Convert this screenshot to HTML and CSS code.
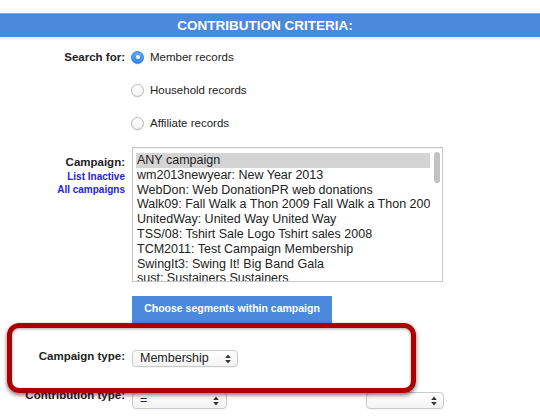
FILE: index.html
```html
<!DOCTYPE html>
<html>
<head>
<meta charset="utf-8">
<link rel="stylesheet" href="styles.css">
</head>
<body>
<div class="header">CONTRIBUTION CRITERIA:</div>
<div class="form">
  <div class="row row-search">
    <div class="label label-search">Search for:</div>
    <div class="radios">
      <div class="radio"><span class="dot checked"></span>Member records</div>
      <div class="radio"><span class="dot"></span>Household records</div>
      <div class="radio"><span class="dot"></span>Affiliate records</div>
    </div>
  </div>
  <div class="row row-campaign">
    <div class="label label-campaign">
      <div>Campaign:</div>
      <a class="link">List Inactive</a>
      <a class="link">All campaigns</a>
    </div>
    <div class="campaign-field">
      <div class="listbox">
        <div class="items">
          <div class="item sel">ANY campaign</div>
          <div class="item">wm2013newyear: New Year 2013</div>
          <div class="item">WebDon: Web DonationPR web donations</div>
          <div class="item">Walk09: Fall Walk a Thon 2009 Fall Walk a Thon 2009</div>
          <div class="item">UnitedWay: United Way United Way</div>
          <div class="item">TSS/08: Tshirt Sale Logo Tshirt sales 2008</div>
          <div class="item">TCM2011: Test Campaign Membership</div>
          <div class="item">SwingIt3: Swing It! Big Band Gala</div>
          <div class="item">sust: Sustainers Sustainers</div>
        </div>
        <div class="track"><div class="thumb"></div></div>
      </div>
      <div class="btn">Choose segments within campaign</div>
    </div>
  </div>
  <div class="row row-ctype">
    <div class="label label-inline">Campaign type:</div>
    <div class="controls">
      <div class="select select-ctype">
        <span class="sel-text">Membership</span>
        <svg class="arrows" width="6" height="10" viewBox="0 0 6 10"><path d="M3 0.5 L5.8 4 L0.2 4 Z M3 9.5 L5.8 6 L0.2 6 Z" fill="#333"/></svg>
      </div>
    </div>
  </div>
  <div class="row row-contrib">
    <div class="label label-inline label-contrib">Contribution type:</div>
    <div class="controls contrib-controls">
      <div class="select select-op">
        <span class="sel-text">=</span>
        <svg class="arrows" width="6" height="10" viewBox="0 0 6 10"><path d="M3 0.5 L5.8 4 L0.2 4 Z M3 9.5 L5.8 6 L0.2 6 Z" fill="#333"/></svg>
      </div>
      <div class="select select-val">
        <span class="sel-text"></span>
        <svg class="arrows" width="6" height="10" viewBox="0 0 6 10"><path d="M3 0.5 L5.8 4 L0.2 4 Z M3 9.5 L5.8 6 L0.2 6 Z" fill="#333"/></svg>
      </div>
    </div>
  </div>
</div>
<div class="annotation"></div>
</body>
</html>
```
FILE: styles.css
```css
html, body {
  margin: 0;
  padding: 0;
  background: #fff;
}
body {
  font-family: "Liberation Sans", Arial, sans-serif;
  color: #222;
  width: 540px;
  height: 417px;
  overflow: hidden;
  position: relative;
}
.header {
  margin-top: 13px;
  height: 23px;
  border-top: 1px solid #7aa8e8;
  background: #4a89dc;
  color: #fff;
  font-weight: bold;
  font-size: 13.5px;
  line-height: 23px;
  text-align: center;
  padding-right: 10px;
  box-shadow: 0 2px 1px rgba(74, 137, 220, 0.12);
}
.form {
  padding-top: 3.5px;
}
.row {
  display: grid;
  grid-template-columns: 125px 1fr;
  column-gap: 7px;
}
.label {
  text-align: right;
  font-weight: bold;
  font-size: 11.5px;
  color: #222;
}
.label-search {
  line-height: 33px;
}
.radios {
  display: flex;
  flex-direction: column;
}
.radio {
  height: 33px;
  display: flex;
  align-items: center;
  font-size: 11.5px;
  color: #222;
}
.dot {
  width: 13px;
  height: 13px;
  box-sizing: border-box;
  border-radius: 50%;
  border: 1px solid #b8b8b8;
  background: linear-gradient(#ffffff, #f2f2f2);
  box-shadow: 0 1px 1px rgba(0, 0, 0, 0.08);
  margin-left: -1px;
  margin-right: 6px;
  position: relative;
}
.dot.checked {
  border-color: #2f7de8;
  background: linear-gradient(#64abfb, #2f86f2);
}
.dot.checked::after {
  content: "";
  position: absolute;
  left: 3.5px;
  top: 3.5px;
  width: 4px;
  height: 4px;
  border-radius: 50%;
  background: #fff;
}
.row-campaign {
  margin-top: 7.5px;
}
.label-campaign {
  padding-top: 9px;
  line-height: 13.6px;
}
.link {
  display: block;
  color: #2323e6;
  font-size: 10px;
  text-decoration: none;
}
.campaign-field {
  display: flex;
  flex-direction: column;
  align-items: flex-start;
}
.listbox {
  width: 311px;
  height: 135px;
  box-sizing: border-box;
  border: 1px solid #c6c6c6;
  display: flex;
  overflow: hidden;
  box-shadow: inset 0 1px 1px rgba(0, 0, 0, 0.05);
}
.items {
  flex: 1;
  padding: 5px 0 0 3px;
  overflow: hidden;
  min-width: 0;
}
.item {
  font-size: 12.5px;
  line-height: 14.8px;
  padding-left: 1px;
  white-space: nowrap;
  color: #222;
}
.item.sel {
  background: #d4d4d4;
}
.track {
  width: 12px;
  flex: none;
}
.thumb {
  margin-top: 4px;
  margin-left: 4px;
  width: 6px;
  height: 31px;
  border-radius: 3px;
  background: #c2c2c2;
}
.btn {
  margin-top: 14px;
  width: 200px;
  height: 30px;
  box-sizing: border-box;
  background: #4a89dc;
  border-bottom: 1px solid #3b74c4;
  color: #fff;
  font-weight: bold;
  font-size: 10.5px;
  line-height: 25px;
  text-align: center;
}
.row-ctype {
  margin-top: 24px;
}
.label-inline {
  line-height: 13px;
  padding-top: 0;
}
.controls {
  display: flex;
  align-items: flex-start;
}
.select {
  height: 17px;
  box-sizing: border-box;
  border: 1px solid #cacaca;
  border-radius: 4px;
  background: linear-gradient(#ffffff, #f3f3f3);
  box-shadow: 0 1px 1px rgba(0, 0, 0, 0.04);
  display: flex;
  align-items: center;
  justify-content: space-between;
  padding: 0 6px 0 7px;
  font-size: 12.5px;
  color: #222;
}
.sel-text {
  line-height: 15px;
}
.arrows {
  display: block;
}
.select-ctype {
  width: 106px;
}
.row-contrib {
  margin-top: 25px;
}
.label-contrib {
  margin-top: -3px;
}
.contrib-controls {
  gap: 139px;
}
.select-op {
  width: 95px;
  padding-right: 7px;
}
.select-val {
  width: 78px;
}
.annotation {
  position: absolute;
  left: 7px;
  top: 323px;
  width: 409px;
  height: 70px;
  box-sizing: border-box;
  border: 5px solid #ad0000;
  border-radius: 12px;
  box-shadow: 0 2px 4px rgba(0, 0, 0, 0.55), inset 0 1px 3px rgba(0, 0, 0, 0.35);
}
```
